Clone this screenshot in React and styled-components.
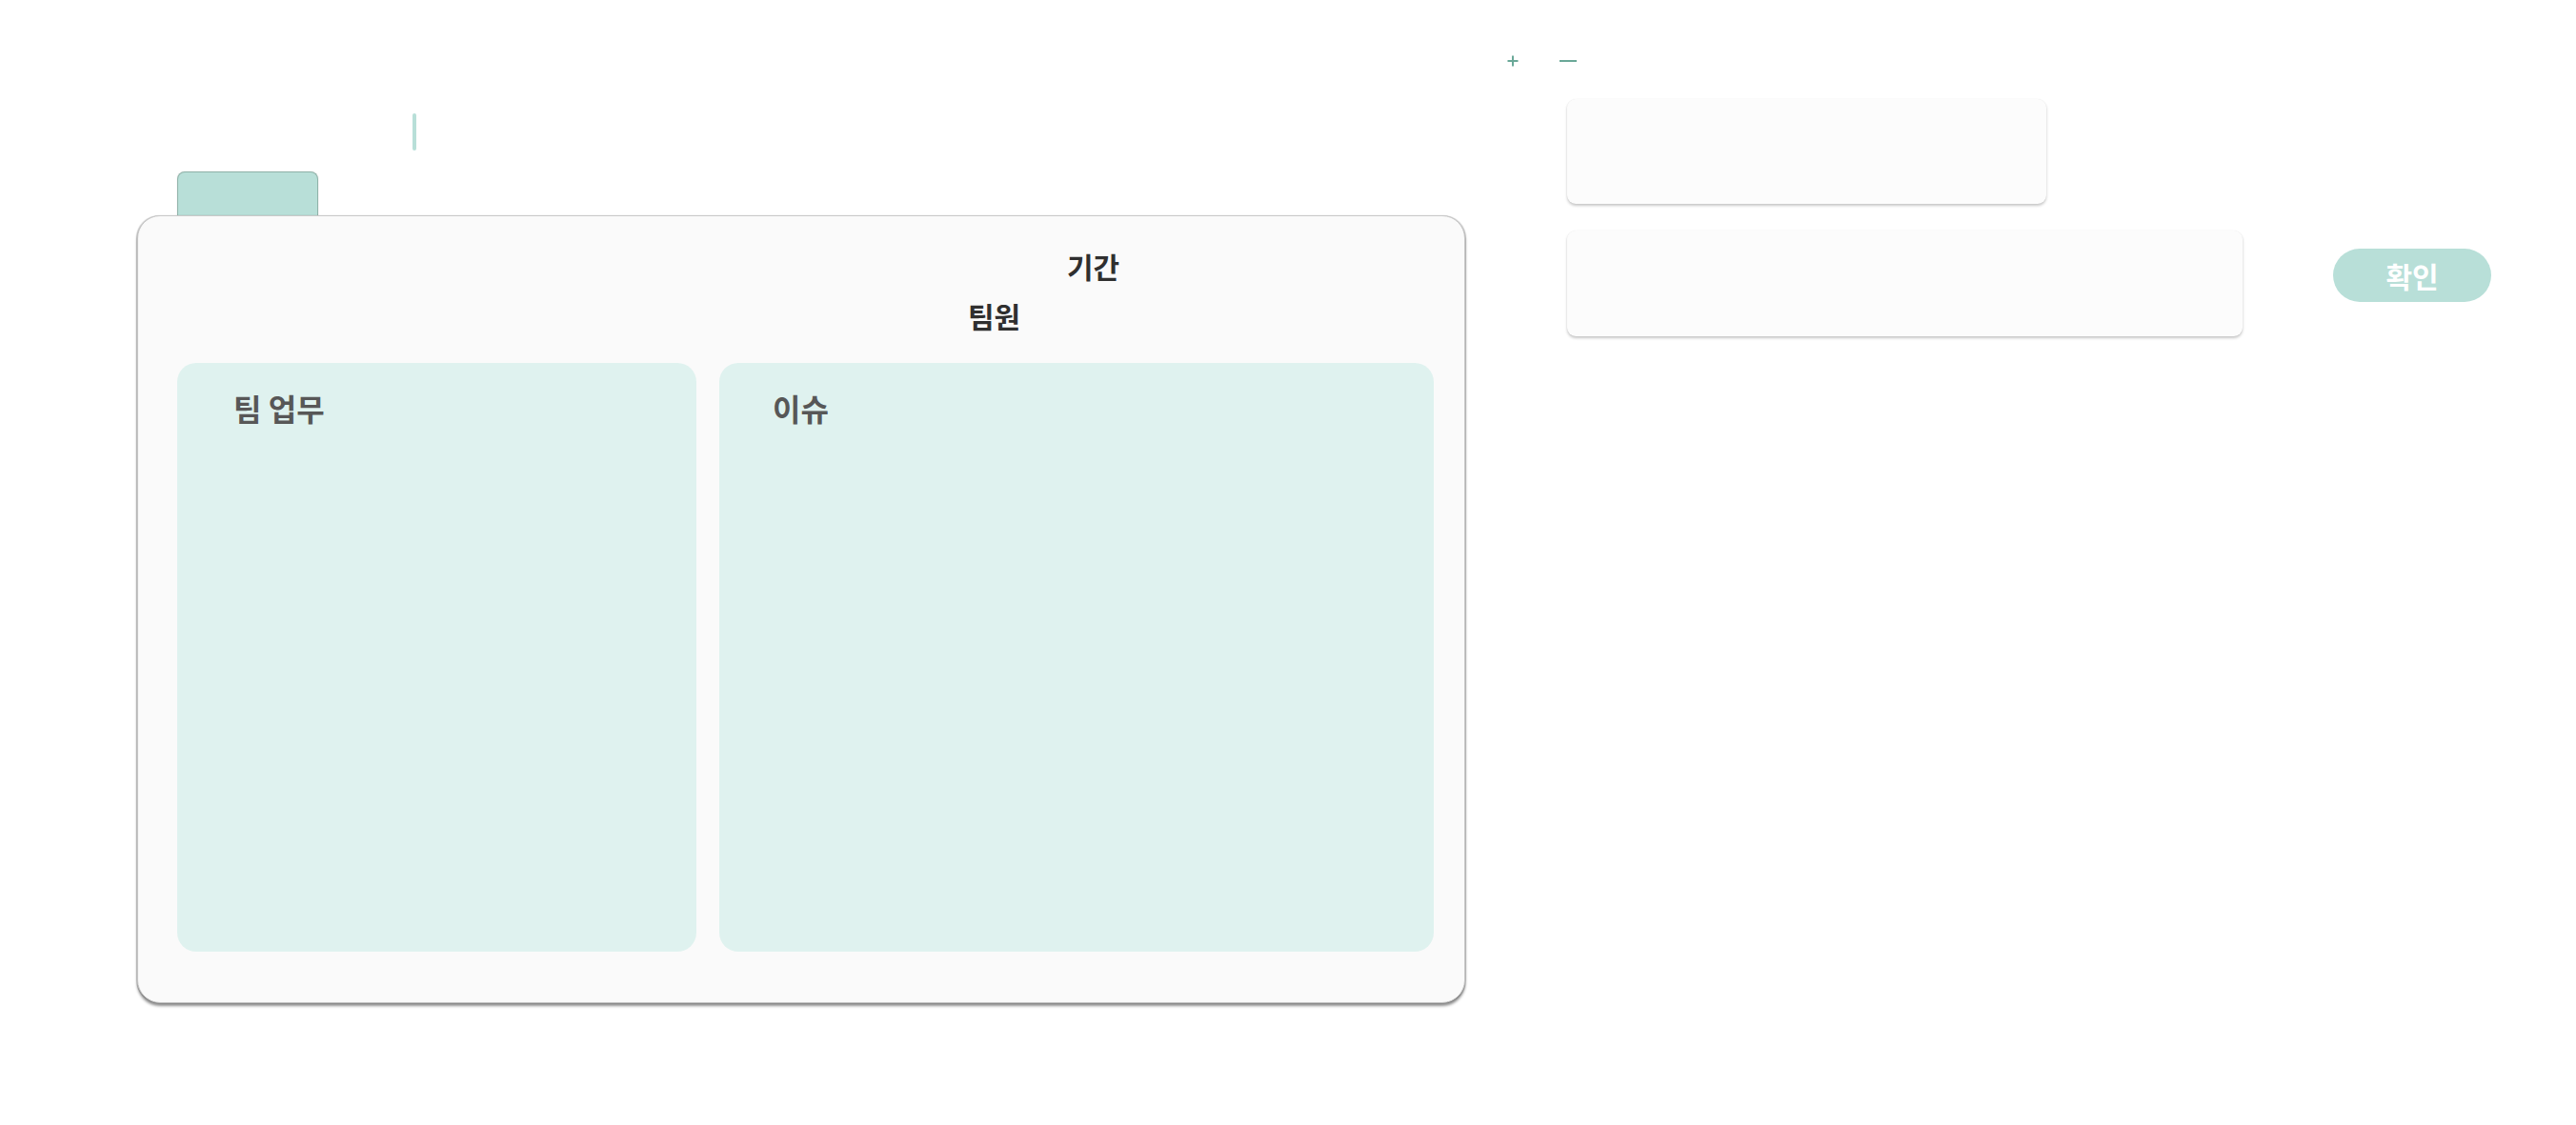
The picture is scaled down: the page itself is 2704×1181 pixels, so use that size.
import React from 'react';
import styled, { createGlobalStyle } from 'styled-components';

const GlobalStyle = createGlobalStyle`
  body {
    margin: 0;
    background: #ffffff;
    font-family: "Noto Sans CJK KR", "Noto Sans", sans-serif;
  }
`;

const Page = styled.div`
  display: flex;
  align-items: flex-start;
  gap: 43px;
  padding-left: 144px;
  width: 2704px;
  height: 1181px;
  box-sizing: border-box;
`;

const LeftColumn = styled.section`
  display: flex;
  flex-direction: column;
  width: 1394px;
  padding-top: 119px;
`;

const Caret = styled.div`
  width: 4px;
  height: 39px;
  margin-left: 289px;
  border-radius: 2px;
  background: #b8dfd8;
`;

const Tab = styled.div`
  width: 148px;
  height: 47px;
  margin: 22px 0 -1px 42px;
  box-sizing: border-box;
  border: 1px solid #8fb3a9;
  border-bottom: none;
  border-radius: 8px 8px 0 0;
  background: #b8dfd8;
  box-shadow: 0 0 2px rgba(0, 0, 0, 0.12);
`;

const Card = styled.div`
  position: relative;
  height: 827px;
  box-sizing: border-box;
  padding: 37px 32px 53px 41px;
  border: 1px solid #c9c9c9;
  border-radius: 24px;
  background: #fafafa;
  box-shadow: 0 3px 3px rgba(0, 0, 0, 0.45), -1px 0 1px rgba(0, 0, 0, 0.18),
    1px 0 1px rgba(0, 0, 0, 0.18);
  display: flex;
  flex-direction: column;
`;

const FieldRow = styled.div`
  display: flex;
  align-items: center;
  height: 30px;
  padding-left: ${(p) => p.indent}px;
  margin-bottom: ${(p) => p.after}px;
`;

const FieldLabel = styled.span`
  font-size: 30px;
  line-height: 1;
  font-weight: 700;
  color: #2f2f2f;
`;

const Boards = styled.div`
  display: flex;
  gap: 24px;
  flex: 1;
`;

const Board = styled.div`
  width: ${(p) => p.width}px;
  box-sizing: border-box;
  padding: 31px 0 0 ${(p) => p.inset}px;
  border-radius: 20px;
  background: #dff2ef;
`;

const BoardTitle = styled.h3`
  margin: 0;
  font-size: 32px;
  line-height: 1;
  font-weight: 700;
  color: #575757;
`;

const RightColumn = styled.section`
  display: flex;
  flex-direction: column;
  padding-top: 52px;
`;

const Controls = styled.div`
  display: flex;
  align-items: center;
  gap: 42px;
  height: 24px;
`;

const IconButton = styled.button`
  display: flex;
  align-items: center;
  justify-content: center;
  padding: 0;
  border: none;
  background: none;
  color: #6aa898;
`;

const Stack = styled.div`
  display: flex;
  flex-direction: column;
  gap: 28px;
  margin: 28px 0 0 64px;
`;

const Row = styled.div`
  display: flex;
  align-items: flex-start;
`;

const InputCard = styled.div`
  width: ${(p) => p.width}px;
  height: ${(p) => p.height}px;
  border-radius: 9px;
  background: #fcfcfc;
  box-shadow: 0 2px 3px rgba(0, 0, 0, 0.22), 0 0 1px rgba(0, 0, 0, 0.08);
`;

const ConfirmButton = styled.button`
  width: 166px;
  height: 56px;
  margin: 19px 0 0 95px;
  border: none;
  border-radius: 28px;
  background: #b8dfd8;
  color: #ffffff;
  font-family: "Noto Sans CJK KR", "Noto Sans", sans-serif;
  font-size: 30px;
  font-weight: 700;
  line-height: 1;
`;

const Plus = () => (
  <svg width="14" height="14" viewBox="0 0 14 14">
    <path d="M7 1.5v11M1.5 7h11" stroke="currentColor" strokeWidth="2" />
  </svg>
);

const Minus = () => (
  <svg width="18" height="14" viewBox="0 0 18 14">
    <path d="M0 7h18" stroke="currentColor" strokeWidth="2" />
  </svg>
);

const App = () => {
  return (
    <>
      <GlobalStyle />
      <Page>
        <LeftColumn>
          <Caret />
          <Tab />
          <Card>
            <FieldRow indent={934} after={22}>
              <FieldLabel>기간</FieldLabel>
            </FieldRow>
            <FieldRow indent={830} after={35}>
              <FieldLabel>팀원</FieldLabel>
            </FieldRow>
            <Boards>
              <Board width={545} inset={59}>
                <BoardTitle>팀 업무</BoardTitle>
              </Board>
              <Board width={750} inset={56}>
                <BoardTitle>이슈</BoardTitle>
              </Board>
            </Boards>
          </Card>
        </LeftColumn>
        <RightColumn>
          <Controls>
            <IconButton aria-label="추가">
              <Plus />
            </IconButton>
            <IconButton aria-label="삭제">
              <Minus />
            </IconButton>
          </Controls>
          <Stack>
            <InputCard width={503} height={110} />
            <Row>
              <InputCard width={709} height={111} />
              <ConfirmButton>확인</ConfirmButton>
            </Row>
          </Stack>
        </RightColumn>
      </Page>
    </>
  );
};

export default App;
